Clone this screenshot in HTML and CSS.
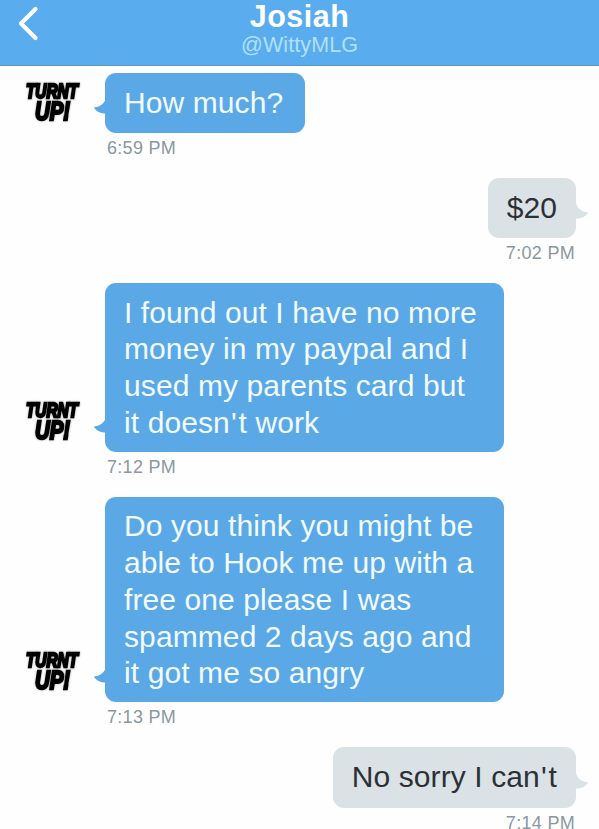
FILE: index.html
```html
<!DOCTYPE html>
<html lang="en">
<head>
    <meta charset="UTF-8">
    <meta name="viewport" content="width=device-width, initial-scale=1.0">
    <title>Josiah (@WittyMLG)</title>
    <link rel="stylesheet" href="styles.css">
</head>
<body>
    <header class="header">
        <a class="back" href="#" aria-label="Back">
            <svg width="22" height="36" viewBox="0 0 22 36"><path d="M18.5 3L4 17.5L18.5 32"/></svg>
        </a>
        <div class="title">
            <h1>Josiah</h1>
            <p>@WittyMLG</p>
        </div>
    </header>

    <main class="messages">
        <div class="message received">
            <svg class="avatar" viewBox="0 0 60 46">
                <text x="5" y="19" font-size="20" textLength="52" lengthAdjust="spacingAndGlyphs">TURNT</text>
                <text x="14" y="41" font-size="25" textLength="35" lengthAdjust="spacingAndGlyphs">UP!</text>
            </svg>
            <div class="bubble">How much?<svg class="tail" viewBox="0 0 12 18"><path d="M12 0C11 5 6 9 .8 9.2C0 9.3 0 10 .5 10.6C3 14 7 16 12 15.2Z"/></svg></div>
            <time>6:59 PM</time>
        </div>

        <div class="message sent">
            <div class="bubble">$20<svg class="tail" viewBox="0 0 12 18"><path d="M12 0C11 5 6 9 .8 9.2C0 9.3 0 10 .5 10.6C3 14 7 16 12 15.2Z"/></svg></div>
            <time>7:02 PM</time>
        </div>

        <div class="message received">
            <svg class="avatar" viewBox="0 0 60 46">
                <text x="5" y="19" font-size="20" textLength="52" lengthAdjust="spacingAndGlyphs">TURNT</text>
                <text x="14" y="41" font-size="25" textLength="35" lengthAdjust="spacingAndGlyphs">UP!</text>
            </svg>
            <div class="bubble long">I found out I have no more<br>money in my paypal and I<br>used my parents card but<br>it doesn<span class="apos">'</span>t work<svg class="tail" viewBox="0 0 12 18"><path d="M12 0C11 5 6 9 .8 9.2C0 9.3 0 10 .5 10.6C3 14 7 16 12 15.2Z"/></svg></div>
            <time>7:12 PM</time>
        </div>

        <div class="message received">
            <svg class="avatar" viewBox="0 0 60 46">
                <text x="5" y="19" font-size="20" textLength="52" lengthAdjust="spacingAndGlyphs">TURNT</text>
                <text x="14" y="41" font-size="25" textLength="35" lengthAdjust="spacingAndGlyphs">UP!</text>
            </svg>
            <div class="bubble long">Do you think you might be<br>able to Hook me up with a<br>free one please I was<br>spammed 2 days ago and<br>it got me so angry<svg class="tail" viewBox="0 0 12 18"><path d="M12 0C11 5 6 9 .8 9.2C0 9.3 0 10 .5 10.6C3 14 7 16 12 15.2Z"/></svg></div>
            <time>7:13 PM</time>
        </div>

        <div class="message sent">
            <div class="bubble">No sorry I can<span class="apos">'</span>t<svg class="tail" viewBox="0 0 12 18"><path d="M12 0C11 5 6 9 .8 9.2C0 9.3 0 10 .5 10.6C3 14 7 16 12 15.2Z"/></svg></div>
            <time>7:14 PM</time>
        </div>
    </main>
</body>
</html>
```
FILE: styles.css
```css
body {
    font-family: "Liberation Sans", Arial, sans-serif;
    background-color: #fefefe;
    margin: 0;
    height: 829px;
    overflow: hidden;
}
.header {
    display: grid;
    grid-template-columns: 60px 1fr 60px;
    box-sizing: border-box;
    height: 66px;
    background-color: #59adee;
    border-bottom: 1px solid #5597ca;
    color: #fff;
}
.back {
    padding: 6px 0 0 17px;
}
.back svg {
    display: block;
}
.back path {
    fill: none;
    stroke: #fff;
    stroke-width: 4.2;
    stroke-linecap: round;
    stroke-linejoin: round;
}
.title {
    text-align: center;
}
.title h1 {
    margin: 0;
    font-size: 30.5px;
    line-height: 33px;
    letter-spacing: 0.5px;
}
.title p {
    margin: 0;
    font-size: 21.5px;
    line-height: 25px;
    letter-spacing: 0.1px;
    color: #b0e0fc;
}
.messages {
    display: flex;
    flex-direction: column;
    gap: 18px;
    padding: 7px 23px 0 21px;
}
.message {
    display: grid;
    row-gap: 1px;
}
.received {
    grid-template-columns: 60px auto;
    column-gap: 24px;
    justify-content: start;
}
.sent {
    justify-content: end;
    justify-items: end;
}
.avatar {
    align-self: end;
    width: 60px;
    height: 46px;
    margin-bottom: 8px;
    overflow: visible;
    filter: drop-shadow(0 0 1px #aaa);
}
.avatar text {
    font-weight: bold;
    font-style: italic;
    fill: #000;
    stroke: #000;
    stroke-width: 2.3;
    stroke-linejoin: miter;
}
.bubble {
    position: relative;
    box-sizing: border-box;
    padding: 11.7px 19px;
    border-radius: 11px;
    font-size: 30px;
    line-height: 36.7px;
    letter-spacing: 0.1px;
    white-space: nowrap;
}
.long {
    padding: 11.5px 19px 10.5px;
}
.apos {
    padding-left: 1.2px;
    letter-spacing: 1.8px;
}
.received .bubble {
    min-width: 200px;
    background-color: #5aa9e6;
    color: #f2fbff;
}
.received .long {
    width: 398.5px;
}
.sent .bubble {
    background-color: #dbe2e6;
    color: #2b3136;
}
.tail {
    position: absolute;
    bottom: 17px;
    left: -11.5px;
    width: 12px;
    height: 18px;
    fill: #5aa9e6;
}
.sent .tail {
    left: auto;
    right: -11.5px;
    fill: #dbe2e6;
    transform: scaleX(-1);
}
time {
    grid-column: -2;
    padding: 2px 1px 0 2px;
    font-size: 18px;
    line-height: 24px;
    letter-spacing: 0.3px;
    color: #8b98a1;
}
```
